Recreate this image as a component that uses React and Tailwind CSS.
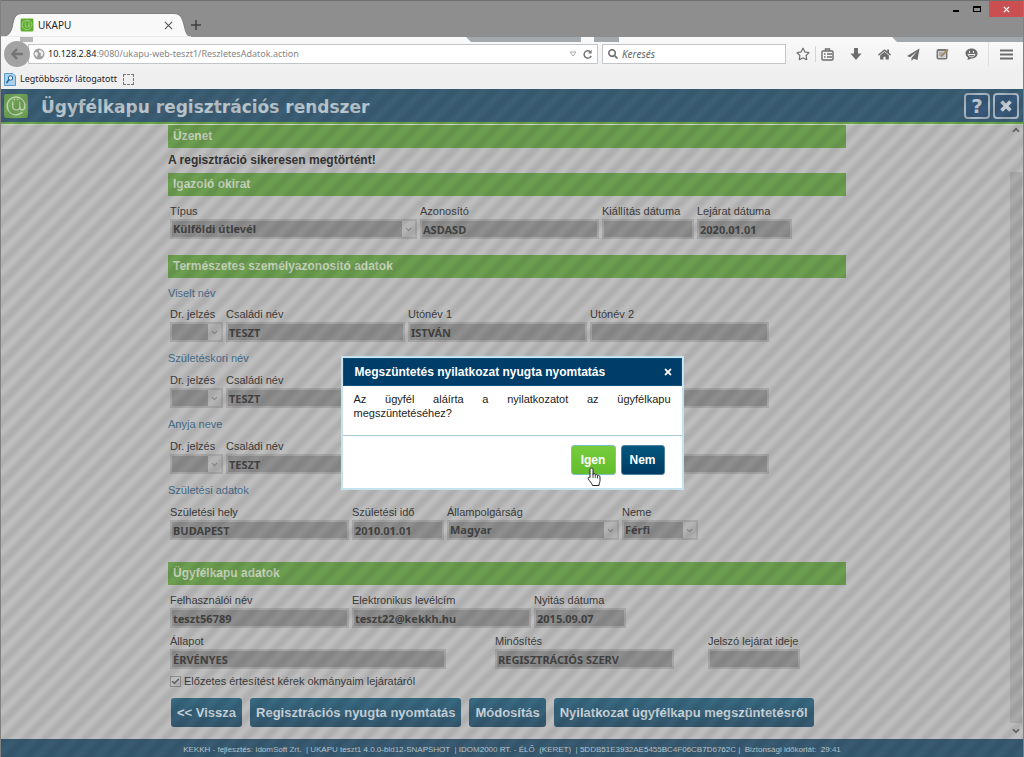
import { ChevronDown, ChevronUp, Check } from 'lucide-react';
import { FaHome, FaPaperPlane, FaRegStar, FaSearch, FaTimes } from 'react-icons/fa';

const fieldBox =
  'block w-full h-5 px-px rounded-none border-2 border-[#a6a6a6] bg-[#8e8e8e] text-[#434343] text-[11px] leading-4 font-bold font-["Noto_Sans",sans-serif] opacity-100';

function Field({ id, label, value, width, options }) {
  return (
    <div className={width}>
      <label htmlFor={id} className="block h-4 text-[11px] leading-4 whitespace-nowrap text-[#3c3c3c]">
        {label}
      </label>
      {options ? (
        <div className="relative">
          <select id={id} disabled defaultValue={value} className={`appearance-none ${fieldBox}`}>
            {options.map((o) => (
              <option key={o}>{o}</option>
            ))}
          </select>
          <span className="absolute right-[2px] top-[2px] h-4 w-[13px] bg-[#b4b4b4] flex items-center justify-center">
            <ChevronDown size={9} strokeWidth={3} className="text-[#858585]" />
          </span>
        </div>
      ) : (
        <input id={id} type="text" readOnly defaultValue={value} className={fieldBox} />
      )}
    </div>
  );
}

function SectionTitle({ children }) {
  return (
    <h2 className="h-[23px] pl-[5px] bg-[#6c9e50] text-[#c6d2be] text-[12px] leading-[22px] font-bold">
      {children}
    </h2>
  );
}

function SubTitle({ children }) {
  return <h3 className="h-4 text-[11px] leading-4 text-[#466c8c]">{children}</h3>;
}

function NameRow({ id, first, second, third }) {
  return (
    <div className="flex gap-[3px] pl-[2px]">
      <Field id={`${id}-dr`} label="Dr. jelzés" value="" width="w-[53px]" options={['']} />
      <Field id={`${id}-csaladi`} label="Családi név" value={first} width="w-[179px]" />
      <Field id={`${id}-uto1`} label="Utónév 1" value={second} width="w-[179px]" />
      <Field id={`${id}-uto2`} label="Utónév 2" value={third} width="w-[179px]" />
    </div>
  );
}

function ActionButton({ children }) {
  return (
    <button
      type="button"
      className="h-[29px] px-[6px] rounded-[3px] bg-linear-to-b from-[#376a82] to-[#34586f] text-[#c9d3d9] text-[13px] leading-4 font-bold whitespace-nowrap"
    >
      {children}
    </button>
  );
}

function AtLogo({ size, className }) {
  return (
    <svg viewBox="0 0 24 24" width={size} height={size} className={className}>
      <rect x="1" y="1" width="22" height="22" rx="2" fill="currentColor" />
      <g fill="none" stroke="#c3d3b6" strokeWidth="1.200" strokeLinecap="round">
        <path d="M17.500 18A8.200 8.200 0 1 1 20.200 11.500c0 2.700-1 4.200-2.600 4.200S15.500 14.600 15.500 13V8.500" />
        <path d="M9 8.500v4.200c0 1.800 1 2.900 2.900 2.900s3.600-1.200 3.600-3M10.500 6v.2M13.700 6v.2" />
      </g>
    </svg>
  );
}

function TitleBar() {
  return (
    <div className="h-[37px] bg-[#8e8e8e] border-t border-[#707070] flex items-end">
      <div className="relative w-[190px] h-6">
        <svg viewBox="0 0 190 24" width="190" height="24" className="absolute inset-0">
          <path
            d="M0 24C7 23.500 10 20 11.500 13C13 5 14 1 21 .5H173C180 1 181 5 183 12C184.500 19 186 23.500 190 24Z"
            fill="#f9f9f9"
            stroke="#707070"
            strokeWidth="0.8"
          />
          <path d="M0 24H190" stroke="#f9f9f9" strokeWidth="1.500" />
        </svg>
        <div className="relative flex items-center h-6 pl-[19px] pr-[18px] text-[10px] text-[#222]">
          <AtLogo size={14} className="text-[#5fae2e]" />
          <span className="pl-1">UKAPU</span>
          <button type="button" aria-label="Lap bezárása" className="ml-auto">
            <svg viewBox="0 0 10 10" width="9" height="9" stroke="#555" strokeWidth="1.200">
              <path d="M1 1l8 8M9 1l-8 8" />
            </svg>
          </button>
        </div>
      </div>
      <button type="button" aria-label="Új lap" className="h-6">
        <svg viewBox="0 0 10 10" width="10" height="10" stroke="#404040" strokeWidth="1.500">
          <path d="M5 0v10M0 5h10" />
        </svg>
      </button>
      <div className="ml-auto self-start flex h-4">
        <button type="button" aria-label="Kis méret" className="w-[18px] flex justify-center pt-[9px]">
          <span className="w-[6px] h-[2px] bg-black" />
        </button>
        <button type="button" aria-label="Teljes méret" className="w-6 flex justify-center pt-[5px]">
          <span className="w-2 h-[6px] border border-t-2 border-black" />
        </button>
        <button type="button" aria-label="Bezárás" className="w-[34px] bg-[#c94f50] flex items-center justify-center">
          <svg viewBox="0 0 8 8" width="7" height="7" stroke="#fff" strokeWidth="1.600">
            <path d="M1 1l6 6M7 1l-6 6" />
          </svg>
        </button>
      </div>
    </div>
  );
}

function Toolbar() {
  return (
    <div className="flex items-center h-6 pl-[3px] pr-[10px] text-[#6c6c6c]">
      <button
        type="button"
        aria-label="Vissza"
        className="relative z-10 shrink-0 w-[26px] h-[26px] -mr-[2px] rounded-full bg-[#a2a2a2] flex items-center justify-center"
      >
        <svg viewBox="0 0 12 12" width="12" height="12" fill="none" stroke="#757575" strokeWidth="2.400">
          <path d="M6 1L1.500 6L6 11M2 6h10" />
        </svg>
      </button>
      <div className="flex-1 h-5 flex items-center border border-[#c3c6c9] bg-white pl-1 pr-1">
        <svg viewBox="0 0 12 12" width="12" height="12" className="shrink-0">
          <circle cx="6" cy="6" r="5.500" fill="#a0a0a0" />
          <path d="M1.500 5C3 3 5 4 5 5.500S4 7 4 9C3 8.500 1.500 7 1.500 5ZM6 2l3 .5 1.500 3-1.500 3-1.500-1L8 5.500 6 4Z" fill="#eee" />
        </svg>
        <div className="flex-1 pl-[3px] whitespace-nowrap text-[#858585]">
          <span className="text-[#222]">10.128.2.84</span>:9080/ukapu-web-teszt1/ReszletesAdatok.action
        </div>
        <svg viewBox="0 0 8 6" width="8" height="6" fill="none" stroke="#aaa" className="mr-[5px]">
          <path d="M1 1h6L4 5Z" />
        </svg>
        <svg viewBox="0 0 12 12" width="11" height="11" fill="none" stroke="#777" strokeWidth="1.600">
          <path d="M10 7.500A4 4 0 1 1 9 3" />
          <path d="M10.500 .8V5H6.500Z" fill="#777" stroke="none" />
        </svg>
      </div>
      <div className="ml-1 w-[184px] h-5 flex items-center border border-[#c3c6c9] bg-white px-[5px]">
        <FaSearch size={10} className="shrink-0" />
        <input
          type="text"
          aria-label="Keresés"
          placeholder="Keresés"
          className="w-full pl-1 italic text-[10px] outline-none placeholder:text-[#666]"
        />
      </div>
      <div className="flex items-center pl-[10px]">
        <FaRegStar size={14} />
        <span className="w-px h-4 ml-[5px] mr-[5px] bg-[#d4d4d4]" />
        <svg viewBox="0 0 13 13" width="13" height="13" fill="none" stroke="currentColor" strokeWidth="1.400">
          <rect x="1" y="3" width="11" height="9" rx="1" />
          <path d="M4.500 3V1h4v2M3 6h1.500M6 6h5M3 9h1.500M6 9h5" />
        </svg>
        <svg viewBox="0 0 12 12" width="12" height="12" fill="currentColor" className="ml-[16px]">
          <path d="M4 0h4v5.500h3.500L6 12L.5 5.500H4Z" />
        </svg>
        <FaHome size={13} className="ml-[16px]" />
        <svg viewBox="0 0 13 13" width="13" height="13" fill="currentColor" className="ml-[16px]">
          <path d="M12.500 .5L0 8l3 1.200L10 3.500L4.500 10v3l2-2.200L10.500 12Z" />
        </svg>
        <svg viewBox="0 0 13 12" width="13" height="12" className="ml-[16px]">
          <rect x=".5" y="1" width="11" height="10.500" rx="2" fill="#777" />
          <rect x="2" y="3" width="8" height="7" fill="#cfcfcf" />
          <path d="M3 5h4M3 7h3" stroke="#8a8a8a" />
          <path d="M5 8.500L12 1.500" stroke="#a08c60" strokeWidth="1.800" />
        </svg>
        <svg viewBox="0 0 13 12" width="13" height="12" className="ml-[16px]">
          <path d="M6.500 .5C10 .5 12.500 2.800 12.500 5.500S10 10.500 6.500 10.500L2.500 12L3 9.500C1.500 8.500.5 7 .5 5.500.5 2.800 3 .5 6.500.5Z" fill="currentColor" />
          <path d="M4.500 3v2M8.500 3v2M3 6.500h7C9 9.500 4 9.500 3 6.500Z" stroke="#eee" fill="none" />
        </svg>
        <span className="w-px h-6 ml-[10px] mr-[11px] bg-[#dedede]" />
        <svg viewBox="0 0 13 11" width="13" height="11" stroke="currentColor" strokeWidth="2">
          <path d="M0 1.500h13M0 5.500h13M0 9.500h13" />
        </svg>
      </div>
    </div>
  );
}

function Browser() {
  return (
    <div className="text-[9px] font-['Noto_Sans',sans-serif] bg-[#efefef]">
      <TitleBar />
      <div className="h-8 bg-linear-to-b from-[#fafafa] to-[#f0f0f0]">
        <div className="flex h-[5px]">
          <span className="ml-[19px] w-[13px] bg-[#b4b6b8]" />
          <span className="ml-[433px] w-[115px] bg-[#a3a8ad] [clip-path:polygon(0_0,100%_0,100%_100%,5px_100%)]" />
          <span className="ml-[13px] w-[25px] bg-[#a3a8ad]" />
          <span className="ml-auto w-[131px] bg-[#a3a8ad] [clip-path:polygon(0_0,100%_0,100%_100%,5px_100%)]" />
        </div>
        <Toolbar />
      </div>
      <div className="h-5 flex items-center pl-[3px] text-[#1e1e1e]">
        <svg viewBox="0 0 12 13" width="12" height="13">
          <path d="M.5 .5H9L11.500 3V12.500H.5Z" fill="#a9d0ec" stroke="#5b9cc9" />
          <circle cx="6.500" cy="5" r="2.200" fill="#e6f3fb" stroke="#28618f" />
          <path d="M5 6.500L2.500 10" stroke="#28618f" strokeWidth="1.500" />
        </svg>
        <a href="#latogatott" className="pl-1">Legtöbbször látogatott</a>
        <span className="ml-[6px] w-[11px] h-[11px] border border-dashed border-[#777]" />
      </div>
    </div>
  );
}

function Header() {
  return (
    <header className="h-[35px] bg-[#3b5e75] border-b-2 border-[#6ca54c] flex items-center pl-[2px] pr-1">
      <AtLogo size={26} className="text-[#72a457]" />
      <h1 className="pl-3 pt-[2px] text-[17px] leading-6 font-bold font-['DejaVu_Sans',sans-serif] text-[#bac6cd]">
        Ügyfélkapu regisztrációs rendszer
      </h1>
      <div className="ml-auto flex gap-[3px] text-[#c3ccd3]">
        <button type="button" className="w-[26px] h-[26px] rounded-[4px] border-2 border-[#a9b6c0] bg-[#38587a] text-[20px] leading-5 font-bold font-['DejaVu_Sans',sans-serif]">
          ?
        </button>
        <button type="button" aria-label="Kilépés" className="w-[26px] h-[26px] rounded-[4px] border-2 border-[#a9b6c0] bg-[#38587a] flex items-center justify-center">
          <svg viewBox="0 0 12 12" width="12" height="12" stroke="currentColor" strokeWidth="3.600">
            <path d="M1.500 1.500l9 9M10.500 1.500l-9 9" />
          </svg>
        </button>
      </div>
    </header>
  );
}

function Form() {
  return (
    <form className="w-full max-w-[678px] mx-auto">
      <SectionTitle>Üzenet</SectionTitle>
      <p className="py-[5px] text-[12px] leading-[15px] font-bold text-[#343434]">A regisztráció sikeresen megtörtént!</p>
      <SectionTitle>Igazoló okirat</SectionTitle>
      <div className="flex gap-[3px] pl-[2px] pt-[7px]">
        <Field id="tipus" label="Típus" value="Külföldi útlevél" width="w-[247px]" options={['Külföldi útlevél']} />
        <Field id="azonosito" label="Azonosító" value="ASDASD" width="w-[179px]" />
        <Field id="kiallitas" label="Kiállítás dátuma" value="" width="w-[92px]" />
        <Field id="lejarat" label="Lejárat dátuma" value="2020.01.01" width="w-[95px]" />
      </div>
      <div className="pt-4">
        <SectionTitle>Természetes személyazonosító adatok</SectionTitle>
      </div>
      <div className="flex flex-col gap-[8px] pt-[7px]">
        <div className="flex flex-col gap-[5px]">
          <SubTitle>Viselt név</SubTitle>
          <NameRow id="viselt" first="TESZT" second="ISTVÁN" third="" />
        </div>
        <div className="flex flex-col gap-[6px]">
          <SubTitle>Születéskori név</SubTitle>
          <NameRow id="szuletes" first="TESZT" second="ISTVÁN" third="" />
        </div>
        <div className="flex flex-col gap-[6px]">
          <SubTitle>Anyja neve</SubTitle>
          <NameRow id="anya" first="TESZT" second="" third="" />
        </div>
        <div className="flex flex-col gap-[6px]">
          <SubTitle>Születési adatok</SubTitle>
          <div className="flex gap-[3px] pl-[2px]">
            <Field id="hely" label="Születési hely" value="BUDAPEST" width="w-[179px]" />
            <Field id="ido" label="Születési idő" value="2010.01.01" width="w-[92px]" />
            <Field id="allampolgarsag" label="Állampolgárság" value="Magyar" width="w-[172px]" options={['Magyar']} />
            <Field id="neme" label="Neme" value="Férfi" width="w-[76px]" options={['Férfi']} />
          </div>
        </div>
      </div>
      <div className="pt-[22px]">
        <SectionTitle>Ügyfélkapu adatok</SectionTitle>
      </div>
      <div className="flex gap-[3px] pl-[2px] pt-[7px]">
        <Field id="felhasznalo" label="Felhasználói név" value="teszt56789" width="w-[179px]" />
        <Field id="email" label="Elektronikus levélcím" value="teszt22@kekkh.hu" width="w-[179px]" />
        <Field id="nyitas" label="Nyitás dátuma" value="2015.09.07" width="w-[92px]" />
      </div>
      <div className="flex pl-[2px] pt-[5px]">
        <Field id="allapot" label="Állapot" value="ÉRVÉNYES" width="w-[276px] mr-[49px]" />
        <Field id="minosites" label="Minősítés" value="REGISZTRÁCIÓS SZERV" width="w-[179px] mr-[34px]" />
        <Field id="jelszo" label="Jelszó lejárat ideje" value="" width="w-[92px]" />
      </div>
      <label className="flex items-center gap-[3px] pl-[2px] pt-1 text-[11px] leading-4 text-[#3c3c3c]">
        <span className="relative w-[11px] h-[11px]">
          <input type="checkbox" defaultChecked disabled className="block appearance-none w-[11px] h-[11px] border border-[#8f8f8f]" />
          <Check size={9} strokeWidth={4} className="absolute left-px top-px text-[#626262]" />
        </span>
        Előzetes értesítést kérek okmányaim lejáratáról
      </label>
      <div className="flex gap-2 pl-[3px] pt-[9px] pb-2">
        <ActionButton>&lt;&lt; Vissza</ActionButton>
        <ActionButton>Regisztrációs nyugta nyomtatás</ActionButton>
        <ActionButton>Módosítás</ActionButton>
        <ActionButton>Nyilatkozat ügyfélkapu megszüntetésről</ActionButton>
      </div>
    </form>
  );
}

function ConfirmDialog() {
  return (
    <div role="dialog" aria-labelledby="dialog-title" className="w-[343px] border-2 border-[#c5e3ee] bg-white text-[11px]">
      <div className="h-7 pl-[11px] pr-2 flex items-center bg-[#003d68] border border-[#0f527c] text-white">
        <h2 id="dialog-title" className="text-[12px] font-bold">Megszüntetés nyilatkozat nyugta nyomtatás</h2>
        <button type="button" aria-label="Bezárás" className="ml-auto">
          <FaTimes size={10} />
        </button>
      </div>
      <p className="h-[49px] px-[11px] pt-[6px] leading-[14px] text-justify text-[#222]">
        Az ügyfél aláírta a nyilatkozatot az ügyfélkapu megszüntetéséhez?
      </p>
      <div className="h-[53px] pt-[9px] pr-[17px] flex justify-end gap-[5px] border-t border-[#a9cbd8] text-[12px] font-bold text-white">
        <button type="button" className="relative w-[45px] h-[30px] rounded-[3px] border border-[#7bbfc9] bg-linear-to-b from-[#76cc3c] to-[#64bd2d]">
          Igen
          <svg viewBox="0 0 16 20" width="16" height="20" className="absolute left-[15px] top-[21px]">
            <path
              d="M4.500 1C5.500 1 6 1.700 6 2.500V7.500L6.300 6.800C7.200 6.300 8.200 6.800 8.300 7.800C9.200 7.200 10.300 7.600 10.500 8.600C11.500 8.100 13 8.600 13 10V13.500C13 15.500 12 16 12 18.500H5.500C5 16 2 14 1.200 11.500C.8 10.400 2 9.700 3 10.500V2.500C3 1.700 3.500 1 4.500 1Z"
              fill="#fff"
              stroke="#222"
            />
            <path d="M6 7v4M8.300 8v3M10.500 9v2.500" stroke="#222" strokeWidth=".8" />
          </svg>
        </button>
        <button type="button" className="w-[44px] h-[30px] rounded-[3px] border border-[#4d7f9e] bg-linear-to-b from-[#05577f] to-[#003a62]">
          Nem
        </button>
      </div>
    </div>
  );
}

export default function App() {
  return (
    <div className="min-h-screen flex flex-col border-x border-[#808080] font-['Liberation_Sans',Arial,sans-serif]">
      <Browser />
      <div className="relative flex-1 flex flex-col bg-[#bdbdbd]">
        <Header />
        <div className="flex-1 flex border-t border-[#c9d6bf]">
          <main className="flex-1 pl-1">
            <Form />
          </main>
          <div className="w-[14px] flex flex-col items-center text-[#606060]">
            <ChevronUp size={10} strokeWidth={4} />
            <div className="flex-1 w-3 mt-[37px] mb-[3px] bg-[#aaaaaa]" />
            <ChevronDown size={10} strokeWidth={4} className="mb-[3px]" />
          </div>
        </div>
        <footer className="h-[18px] bg-[#385b72] pt-[3px] text-center text-[8px] leading-4 whitespace-pre text-[#bcc8cf]">
          {'KEKKH - fejlesztés: IdomSoft Zrt.  | UKAPU teszt1 4.0.0-bld12-SNAPSHOT  | IDOM2000 RT. - ÉLŐ  (KERET)  | 5DDB51E3932AE5455BC4F06CB7D6762C |  Biztonsági időkorlát:  29:41'}
        </footer>
        {/* striped backdrop behind the dialog */}
        <div className="absolute inset-0 flex items-center justify-center bg-[linear-gradient(135deg,transparent_15%,rgba(0,0,0,0.08)_30%,rgba(0,0,0,0.08)_40%,transparent_55%,transparent_65%,rgba(0,0,0,0.08)_80%,rgba(0,0,0,0.08)_90%,transparent)] bg-size-[20px_20px]">
          <ConfirmDialog />
        </div>
      </div>
    </div>
  );
}
